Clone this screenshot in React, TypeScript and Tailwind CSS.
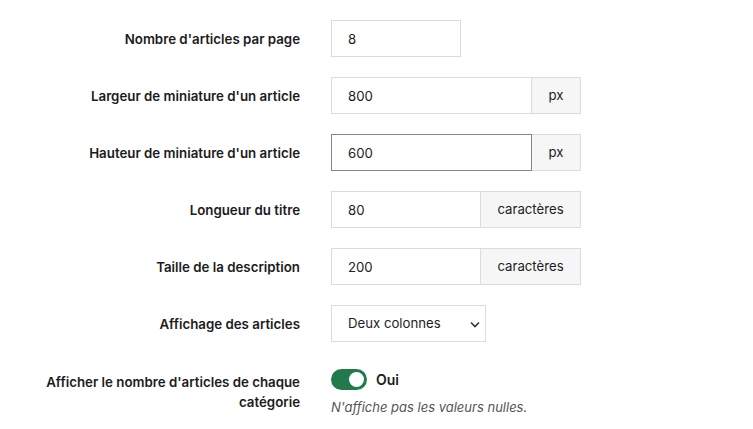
import React from "react";

const labelCls =
  "pt-[9px] text-right text-[13.3px] leading-5 font-semibold text-[#1c1c1c]";
const inputCls =
  "h-[37px] border bg-white px-4 text-[13.2px] text-[#222] outline-none";

function Addon({ children, w }: { children: React.ReactNode; w: string }) {
  return (
    <span
      className={`flex h-[37px] items-center justify-center border border-l-0 border-[#dcdcdc] bg-[#f6f6f6] text-[13.2px] text-[#222] ${w}`}
    >
      {children}
    </span>
  );
}

export default function App() {
  return (
    <div
      className="min-h-[429px] w-[753px] bg-white pt-5"
      style={{ fontFamily: "Inter, 'Noto Sans', sans-serif" }}
    >
      <div className="grid grid-cols-[270px_1fr] gap-x-[31px] gap-y-5 pl-[30px]">
        <label className={labelCls}>Nombre d'articles par page</label>
        <div className="flex">
          <input
            className={`${inputCls} w-[130px] border-[#dcdcdc]`}
            defaultValue="8"
          />
        </div>

        <label className={labelCls}>Largeur de miniature d'un article</label>
        <div className="flex">
          <input
            className={`${inputCls} w-[201px] border-[#dcdcdc]`}
            defaultValue="800"
          />
          <Addon w="w-[49px]">px</Addon>
        </div>

        <label className={labelCls}>Hauteur de miniature d'un article</label>
        <div className="flex">
          <input
            className={`${inputCls} w-[201px] border-[#878787]`}
            defaultValue="600"
          />
          <Addon w="w-[49px]">px</Addon>
        </div>

        <label className={labelCls}>Longueur du titre</label>
        <div className="flex">
          <input
            className={`${inputCls} w-[150px] border-[#dcdcdc]`}
            defaultValue="80"
          />
          <Addon w="w-[100px]">caractères</Addon>
        </div>

        <label className={labelCls}>Taille de la description</label>
        <div className="flex">
          <input
            className={`${inputCls} w-[150px] border-[#dcdcdc]`}
            defaultValue="200"
          />
          <Addon w="w-[100px]">caractères</Addon>
        </div>

        <label className={labelCls}>Affichage des articles</label>
        <div className="flex">
          <div className="relative flex h-[37px] w-[155px] items-center border border-[#dcdcdc] bg-white pl-4 text-[13.2px] text-[#222]">
            Deux colonnes
            <svg
              className="absolute right-[5px] top-[15px]"
              width="10"
              height="7"
              viewBox="0 0 10 7"
              fill="none"
            >
              <path d="M1 1.5l4 4 4-4" stroke="#333" strokeWidth="1.6" />
            </svg>
          </div>
        </div>

        <label className={`${labelCls} pt-[10px]`}>
          Afficher le nombre d'articles de chaque catégorie
        </label>
        <div className="pt-[7px]">
          <div className="flex items-center gap-[9px]">
            <span className="relative inline-block h-[21px] w-[36px] rounded-full bg-[#217a4b]">
              <span className="absolute right-[3px] top-[3px] h-[15px] w-[15px] rounded-full bg-white" />
            </span>
            <span className="text-[14px] font-semibold text-[#1c1c1c]">Oui</span>
          </div>
          <p className="mt-[8px] text-[13px] italic text-[#555]">
            N'affiche pas les valeurs nulles.
          </p>
        </div>
      </div>
    </div>
  );
}
